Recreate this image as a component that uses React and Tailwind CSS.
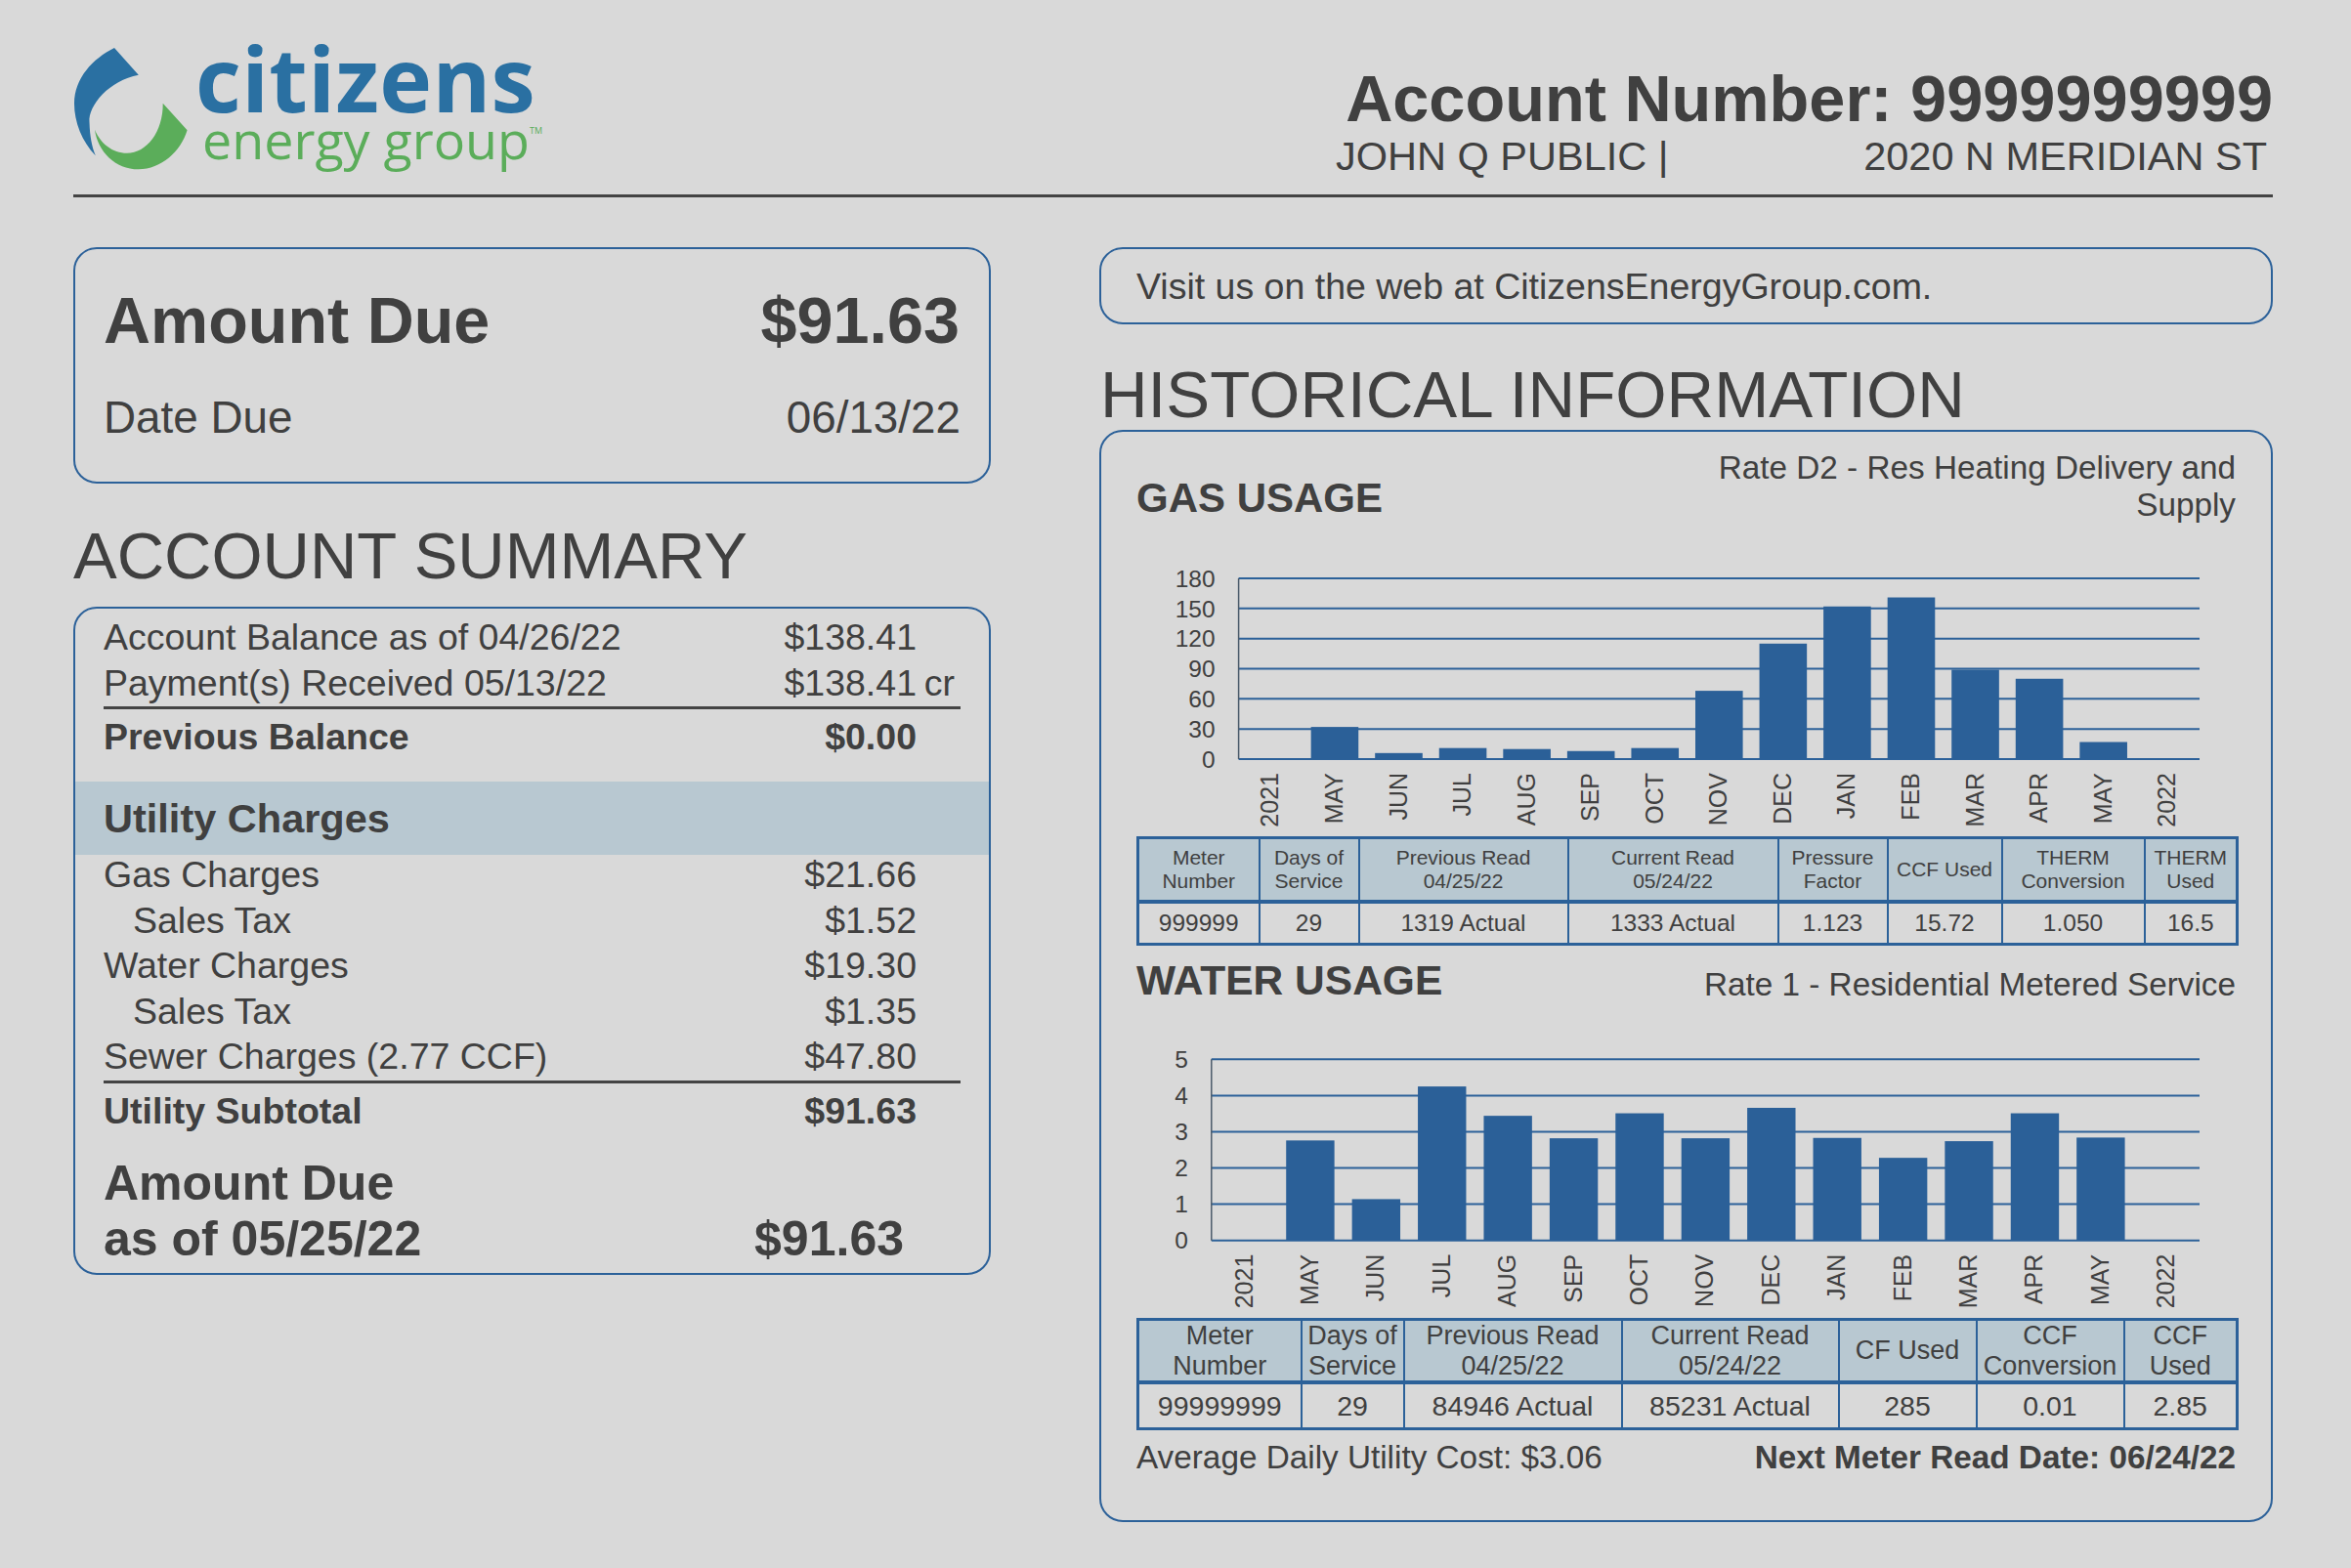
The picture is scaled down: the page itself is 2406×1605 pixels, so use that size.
import React from 'react';

const MONTHS = ['2021', 'MAY', 'JUN', 'JUL', 'AUG', 'SEP', 'OCT', 'NOV', 'DEC', 'JAN', 'FEB', 'MAR', 'APR', 'MAY', '2022'];

const gasValues = [0, 32, 6, 11, 10, 8, 11, 68, 115, 152, 161, 89, 80, 17, 0];
const waterValues = [0, 2.76, 1.14, 4.25, 3.44, 2.82, 3.51, 2.82, 3.66, 2.83, 2.28, 2.74, 3.51, 2.84, 0];

const Logo = () => (
    <div className="flex items-start">
        <svg viewBox="70 45 130 135" className="w-[130px] h-[135px] mt-[45px] ml-[-5px] shrink-0">
            <path fill="#2a70a2" d="M117 49 L141.8 76.7 C112 82 90 108 91.5 125 C92 140 94 150 97.8 159.3 C84 145 76 125 76 106 C76 80 95 60 117 49 Z" />
            <path fill="#5bad5a" d="M166.7 105.7 L191.6 133.3 C185 155 165 173.3 141.8 173.3 C118 173.3 100 155 97 132.7 C103 147 115 156.7 130 156.7 C150 156.7 167 135 166.7 105.7 Z" />
        </svg>
        <div className="mt-[41px] font-['Open_Sans',sans-serif]">
            <div className="text-[91px] leading-[78px] font-bold tracking-[0.4px] text-[#2a70a2]">citizens</div>
            <div className="text-[53.8px] leading-[46px] ml-[7px] text-[#5bad5a] flex items-start">
                energy group
                <span className="text-[9px] leading-[12px] mt-[9px]">TM</span>
            </div>
        </div>
    </div>
);

const Row = ({ label, value, suffix, indent }) => (
    <div className="flex items-center h-[46.5px] px-[29px]">
        <span className={`flex-1 ${indent ? 'pl-[30px]' : ''}`}>{label}</span>
        <span className="relative text-right pr-[45px]">
            {value}
            {suffix && <span className="absolute right-[6px] top-0">{suffix}</span>}
        </span>
    </div>
);

const Chart = ({ x0, top, zero, max, step, barW, labelX, values }) => {
    const x1 = 1088;
    const pitch = (x1 - x0) / 15;
    const ticks = [];
    for (let v = 0; v <= max; v += step) ticks.push(v);
    const yOf = (v) => zero - ((zero - top) * v) / max;
    return (
        <svg viewBox="0 0 1127 321" className="block w-[1127px] h-[321px] ml-[1px]">
            {ticks.map((v) => (
                <g key={v}>
                    <line x1={x0} x2={x1} y1={yOf(v)} y2={yOf(v)} stroke="#2c6199" strokeWidth="2" />
                    <text x={labelX} y={yOf(v) + 8.7} textAnchor="end" className="text-[24.5px] fill-[#404040]">{v}</text>
                </g>
            ))}
            <line x1={x0} x2={x0} y1={top} y2={zero} stroke="#4a5a6a" strokeWidth="1.5" />
            {values.map((v, i) => (
                <rect key={i} x={x0 + pitch * i + (pitch - barW) / 2} y={yOf(v)} width={barW} height={zero - yOf(v)} fill="#2b6098" />
            ))}
            {MONTHS.map((m, i) => (
                <text
                    key={i}
                    textAnchor="end"
                    transform={`translate(${x0 + pitch * i + pitch / 2 + 8}, ${zero + 14}) rotate(-90)`}
                    className="text-[25px] fill-[#404040]"
                >
                    {m}
                </text>
            ))}
        </svg>
    );
};

const Cell = ({ head, children }) => (
    <td className={`border-2 border-[#2c6199] p-0 text-center ${head ? 'bg-[#b8c8d1] border-b-[4px]' : 'pt-[1px]'}`}>{children}</td>
);

export default function App() {
    return (
        <div className="w-[2406px] h-[1605px] bg-[#d9d9d9] text-[#404040] font-['Liberation_Sans',Arial,sans-serif] pl-[75px] pr-[80px] overflow-hidden">
            <header className="flex justify-between h-[202px] border-b-[3px] border-[#444444]">
                <Logo />
                <div className="w-[959px] pt-[68px]">
                    <div className="text-[66.7px] leading-[66px] font-bold text-right">Account Number: 9999999999</div>
                    <div className="flex justify-between text-[41.5px] leading-[46px] mt-[3px] pr-[6px]">
                        <span>JOHN Q PUBLIC |</span>
                        <span>2020 N MERIDIAN ST</span>
                    </div>
                </div>
            </header>

            <main className="grid grid-cols-[939px_1201px] gap-x-[111px] pt-[51px]">
                <section>
                    <div className="h-[242px] border-2 border-[#2c6199] rounded-[24px] px-[29px]">
                        <div className="flex justify-between items-center h-[66px] mt-[41px] pr-[1px] text-[66.5px] font-bold">
                            <span>Amount Due</span>
                            <span>$91.63</span>
                        </div>
                        <div className="flex justify-between items-center h-[50px] mt-[41px] text-[45.8px]">
                            <span>Date Due</span>
                            <span>06/13/22</span>
                        </div>
                    </div>

                    <h2 className="text-[67px] leading-[66px] mt-[41px]">ACCOUNT SUMMARY</h2>

                    <div className="mt-[19px] border-2 border-[#2c6199] rounded-[24px] pt-[6px] pb-[6px] text-[37.5px] leading-[46px]">
                        <Row label="Account Balance as of 04/26/22" value="$138.41" />
                        <Row label="Payment(s) Received 05/13/22" value="$138.41" suffix="cr" />
                        <div className="mx-[29px] border-b-[3px] border-[#444444] mt-[1px]" />
                        <div className="flex items-center h-[58px] pb-[2px] px-[29px] font-bold">
                            <span className="flex-1">Previous Balance</span>
                            <span className="pr-[45px]">$0.00</span>
                        </div>
                        <div className="flex items-center h-[75px] mt-[16px] pt-[1px] px-[29px] bg-[#b8c8d1] text-[41.5px] font-bold">
                            Utility Charges
                        </div>
                        <div className="mt-[-3px]">
                            <Row label="Gas Charges" value="$21.66" />
                            <Row label="Sales Tax" value="$1.52" indent />
                            <Row label="Water Charges" value="$19.30" />
                            <Row label="Sales Tax" value="$1.35" indent />
                            <Row label="Sewer Charges (2.77 CCF)" value="$47.80" />
                        </div>
                        <div className="mx-[29px] mt-[1.5px] border-b-[3px] border-[#444444]" />
                        <div className="flex items-center h-[56.5px] px-[29px] font-bold">
                            <span className="flex-1">Utility Subtotal</span>
                            <span className="pr-[45px]">$91.63</span>
                        </div>
                        <div className="mt-[17px] px-[29px] text-[50px] leading-[57px] font-bold">
                            <div>Amount Due</div>
                            <div className="flex justify-between">
                                <span>as of 05/25/22</span>
                                <span className="pr-[58px]">$91.63</span>
                            </div>
                        </div>
                    </div>
                </section>

                <section>
                    <div className="h-[79px] border-2 border-[#2c6199] rounded-[24px] px-[36px] pt-[1px] flex items-center text-[37.5px]">
                        Visit us on the web at CitizensEnergyGroup.com.
                    </div>

                    <h2 className="text-[67.3px] leading-[66px] mt-[39px] ml-[1px]">HISTORICAL INFORMATION</h2>

                    <div className="h-[1118px] mt-[3px] border-2 border-[#2c6199] rounded-[24px] px-[35px] pt-[16px]">
                        <div className="flex justify-between items-end h-[77px] px-[1px]">
                            <h3 className="text-[42px] leading-[50px] font-bold">GAS USAGE</h3>
                            <p className="text-[33.3px] leading-[37.5px] text-right w-[560px]">Rate D2 - Res Heating Delivery and Supply</p>
                        </div>
                        <Chart x0={104.6} top={57} zero={242} max={180} step={30} barW={48.6} labelX={80.6} values={gasValues} />
                        <table className="w-[1125px] ml-[1px] table-fixed border-collapse border-[3px] border-[#2c6199]">
                            <colgroup>
                                <col className="w-[124px]" />
                                <col className="w-[102px]" />
                                <col className="w-[214px]" />
                                <col className="w-[215px]" />
                                <col className="w-[112px]" />
                                <col className="w-[117px]" />
                                <col className="w-[146px]" />
                                <col className="w-[95px]" />
                            </colgroup>
                            <tbody>
                                <tr className="h-[65px] text-[21px] leading-[24px]">
                                    <Cell head>Meter<br />Number</Cell>
                                    <Cell head>Days of<br />Service</Cell>
                                    <Cell head>Previous Read<br />04/25/22</Cell>
                                    <Cell head>Current Read<br />05/24/22</Cell>
                                    <Cell head>Pressure<br />Factor</Cell>
                                    <Cell head>CCF Used</Cell>
                                    <Cell head>THERM<br />Conversion</Cell>
                                    <Cell head>THERM<br />Used</Cell>
                                </tr>
                                <tr className="h-[44px] text-[24.5px]">
                                    <Cell>999999</Cell>
                                    <Cell>29</Cell>
                                    <Cell>1319 Actual</Cell>
                                    <Cell>1333 Actual</Cell>
                                    <Cell>1.123</Cell>
                                    <Cell>15.72</Cell>
                                    <Cell>1.050</Cell>
                                    <Cell>16.5</Cell>
                                </tr>
                            </tbody>
                        </table>

                        <div className="flex justify-between items-center h-[50px] mt-[10px] px-[1px]">
                            <h3 className="text-[42.5px] leading-[50px] pt-[1px] font-bold">WATER USAGE</h3>
                            <p className="text-[33.3px] leading-[38px] mt-[10px]">Rate 1 - Residential Metered Service</p>
                        </div>
                        <Chart x0={76.8} top={56.3} zero={241.7} max={5} step={1} barW={49.4} labelX={53} values={waterValues} />
                        <table className="w-[1125px] ml-[1px] table-fixed border-collapse border-[3px] border-[#2c6199]">
                            <colgroup>
                                <col className="w-[167px]" />
                                <col className="w-[105px]" />
                                <col className="w-[223px]" />
                                <col className="w-[222px]" />
                                <col className="w-[141px]" />
                                <col className="w-[151px]" />
                                <col className="w-[116px]" />
                            </colgroup>
                            <tbody>
                                <tr className="h-[64px] text-[27px] leading-[30.5px]">
                                    <Cell head>Meter<br />Number</Cell>
                                    <Cell head>Days of<br />Service</Cell>
                                    <Cell head>Previous Read<br />04/25/22</Cell>
                                    <Cell head>Current Read<br />05/24/22</Cell>
                                    <Cell head>CF Used</Cell>
                                    <Cell head>CCF<br />Conversion</Cell>
                                    <Cell head>CCF<br />Used</Cell>
                                </tr>
                                <tr className="h-[44px] text-[28.5px]">
                                    <Cell>99999999</Cell>
                                    <Cell>29</Cell>
                                    <Cell>84946 Actual</Cell>
                                    <Cell>85231 Actual</Cell>
                                    <Cell>285</Cell>
                                    <Cell>0.01</Cell>
                                    <Cell>2.85</Cell>
                                </tr>
                            </tbody>
                        </table>

                        <div className="flex justify-between text-[33.3px] leading-[38px] mt-[9px] px-[1px]">
                            <span>Average Daily Utility Cost: $3.06</span>
                            <span className="font-bold">Next Meter Read Date: 06/24/22</span>
                        </div>
                    </div>
                </section>
            </main>
        </div>
    );
}
